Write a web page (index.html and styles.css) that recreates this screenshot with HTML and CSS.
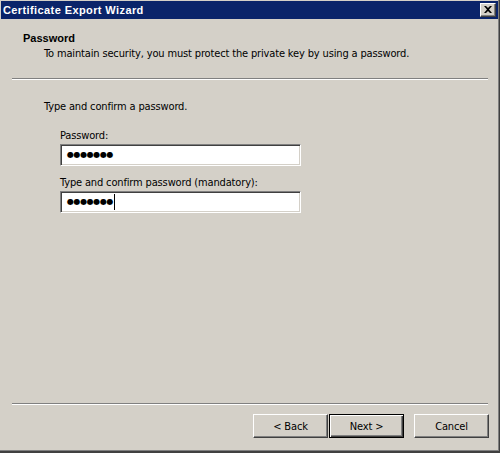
FILE: index.html
```html
<!DOCTYPE html>
<html>
<head>
<meta charset="utf-8">
<link rel="stylesheet" href="styles.css">
</head>
<body>
<div class="window">
  <div class="titlebar">
    <span class="title">Certificate Export Wizard</span>
    <span class="close"><svg width="8" height="7" viewBox="0 0 8 7"><path d="M0 0h2l2 2 2-2h2L5 3.5 8 7H6L4 5 2 7H0l3-3.5z" fill="#000"/></svg></span>
  </div>
  <div class="header">
    <div class="h-title">Password</div>
    <div class="h-sub">To maintain security, you must protect the private key by using a password.</div>
  </div>
  <div class="sep"></div>
  <div class="main">
    <div class="intro">Type and confirm a password.</div>
    <div class="fields">
      <div class="label">Password:</div>
      <div class="field"><span class="dots">●●●●●●●</span></div>
      <div class="label second">Type and confirm password (mandatory):</div>
      <div class="field"><span class="dots">●●●●●●●</span><span class="caret"></span></div>
    </div>
  </div>
  <div class="footer">
    <div class="sep"></div>
    <div class="buttons">
      <div class="btn">&lt; Back</div>
      <div class="btn default"><span>Next &gt;</span></div>
      <div class="btn cancel">Cancel</div>
    </div>
  </div>
</div>
</body>
</html>
```
FILE: styles.css
```css
html, body {
  margin: 0;
  padding: 0;
  background: #ffffff;
}
body {
  font-family: "DejaVu Sans Condensed", "Liberation Sans", sans-serif;
  font-size: 11px;
  letter-spacing: -0.15px;
  color: #000;
}
.window {
  width: 500px;
  height: 453px;
  box-sizing: border-box;
  background: #d4d0c8;
  padding: 1px 1px 0 1px;
  border-right: 1px solid #404040;
  border-bottom: 2px solid #404040;
  box-shadow: inset -1px -1px 0 #808080;
  display: flex;
  flex-direction: column;
}
.titlebar {
  height: 18px;
  background: #0a246a;
  display: flex;
  align-items: center;
  justify-content: space-between;
  padding: 0 2px 0 2px;
}
.title {
  color: #fff;
  font-family: "Liberation Sans", sans-serif;
  font-weight: bold;
  font-size: 11px;
  letter-spacing: 0.4px;
  line-height: 18px;
}
.close {
  width: 16px;
  height: 14px;
  box-sizing: border-box;
  background: #d4d0c8;
  border-top: 1px solid #fff;
  border-left: 1px solid #fff;
  border-right: 1px solid #404040;
  border-bottom: 1px solid #404040;
  box-shadow: inset -1px -1px 0 #808080;
  display: flex;
  align-items: center;
  justify-content: center;
  padding-bottom: 1px;
}
.header {
  padding: 13px 0 0 22px;
}
.h-title {
  font-family: "Liberation Sans", sans-serif;
  font-weight: bold;
  letter-spacing: 0;
  line-height: 13px;
}
.h-sub {
  margin: 2px 0 0 21px;
  line-height: 13px;
}
.sep {
  height: 1px;
  border-top: 1px solid #808080;
  background: #fff;
  margin: 18px 10px 0 11px;
}
.main {
  padding: 20px 0 0 43px;
}
.intro {
  line-height: 13px;
}
.fields {
  padding: 16px 0 0 16px;
}
.label {
  line-height: 13px;
}
.label.second {
  margin-top: 10px;
}
.field {
  margin-top: 2px;
  width: 241px;
  height: 22px;
  box-sizing: border-box;
  background: #fff;
  border-top: 1px solid #808080;
  border-left: 1px solid #808080;
  border-right: 1px solid #fff;
  border-bottom: 1px solid #fff;
  box-shadow: inset 1px 1px 0 #404040, inset -1px -1px 0 #d4d0c8;
  display: flex;
  align-items: center;
  padding-left: 6px;
}
.dots {
  font-family: "DejaVu Sans", sans-serif;
  font-size: 8px;
  letter-spacing: -0.4px;
  line-height: 10px;
}
.caret {
  width: 1px;
  height: 16px;
  background: #000;
  margin-left: 1px;
}
.footer {
  margin-top: auto;
  padding-bottom: 13px;
}
.footer .sep {
  margin-top: 0;
}
.buttons {
  display: flex;
  justify-content: flex-end;
  padding: 9px 9px 0 0;
}
.btn {
  width: 75px;
  height: 24px;
  box-sizing: border-box;
  border-top: 1px solid #fff;
  border-left: 1px solid #fff;
  border-right: 1px solid #404040;
  border-bottom: 1px solid #404040;
  box-shadow: inset -1px -1px 0 #808080;
  display: flex;
  align-items: center;
  justify-content: center;
  line-height: 13px;
}
.btn.default {
  margin-left: 1px;
  border: 1px solid #000;
  box-shadow: inset 1px 1px 0 #fff, inset -1px -1px 0 #404040, inset -2px -2px 0 #808080;
}
.btn.cancel {
  margin-left: 10px;
}
```
